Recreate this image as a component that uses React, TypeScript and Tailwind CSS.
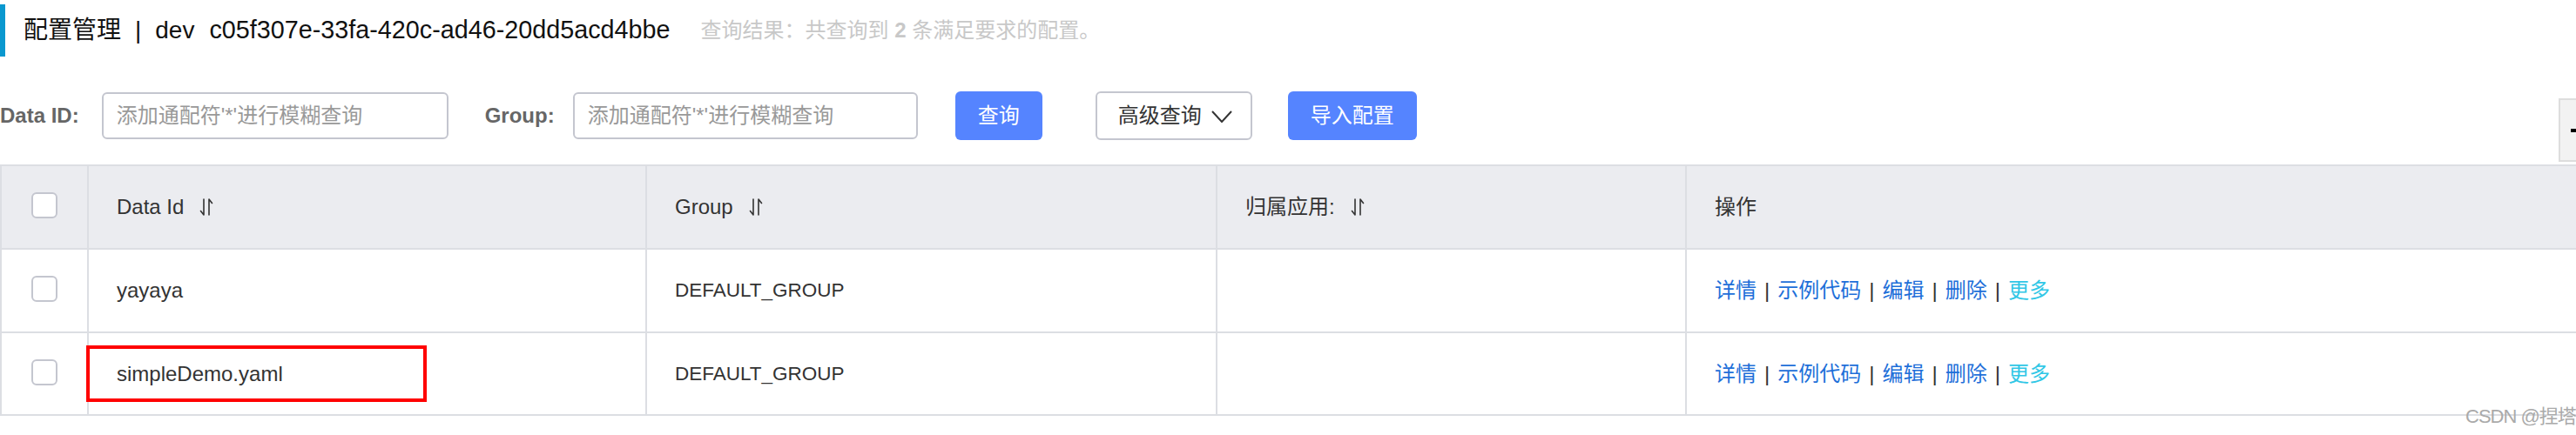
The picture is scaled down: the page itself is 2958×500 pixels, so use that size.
import React from "react";

const SortIcon = () => (
  <svg width="20" height="22" viewBox="0 0 20 22" fill="none" stroke="#333" strokeWidth="1.6" strokeLinecap="round" strokeLinejoin="round" className="ml-[16px]">
    <path d="M7 2V20L3.5 15.5" />
    <path d="M13 20V2L16.5 6.5" />
  </svg>
);

const Checkbox = () => (
  <div className="w-[30px] h-[30px] rounded-[6px] border-2 border-[#c4c6cf] bg-white -mt-[4px]" />
);

const Actions = () => (
  <div className="flex items-center text-[24px]">
    <span className="text-[#1e6fd9]">详情</span>
    <span className="mx-[9px] text-[#333]">|</span>
    <span className="text-[#1e6fd9]">示例代码</span>
    <span className="mx-[9px] text-[#333]">|</span>
    <span className="text-[#1e6fd9]">编辑</span>
    <span className="mx-[9px] text-[#333]">|</span>
    <span className="text-[#1e6fd9]">删除</span>
    <span className="mx-[9px] text-[#333]">|</span>
    <span className="text-[#30c7e6]">更多</span>
  </div>
);

const cell = "border-l-2 border-[#dcdee3] flex items-center pl-[32px]";
const cols = "grid grid-cols-[100px_641px_655px_539px_1fr]";

export default function App() {
  return (
    <div className="relative w-[2958px] h-[500px] overflow-hidden bg-white font-['Liberation_Sans','Noto_Sans_CJK_SC',sans-serif] text-[#333]">
      {/* Title */}
      <div className="mt-[5px] h-[60px] flex items-center">
        <div className="w-[6px] h-[60px] bg-[#0a98cf]" />
        <div className="ml-[21px] flex items-center text-[28px] text-[#111] whitespace-nowrap">
          <span>配置管理</span>
          <span className="mx-[16px]">|</span>
          <span>dev</span>
          <span className="ml-[17px] text-[28.75px]">c05f307e-33fa-420c-ad46-20dd5acd4bbe</span>
          <span className="ml-[35px] text-[24px] text-[#c8c8c8]">
            查询结果：共查询到 <b className="font-bold">2</b> 条满足要求的配置。
          </span>
        </div>
      </div>

      {/* Filters */}
      <div className="mt-[40px] h-[56px] flex items-center whitespace-nowrap">
        <span className="text-[24px] font-bold text-[#666]">Data ID:</span>
        <div className="ml-[26px] w-[398px] h-[54px] rounded-[6px] border-2 border-[#c4c6cf] flex items-center pl-[15px] text-[24px] text-[#999]">
          添加通配符'*'进行模糊查询
        </div>
        <span className="ml-[42px] text-[24px] font-bold text-[#666]">Group:</span>
        <div className="ml-[21px] w-[396px] h-[54px] rounded-[6px] border-2 border-[#c4c6cf] flex items-center pl-[15px] text-[24px] text-[#999]">
          添加通配符'*'进行模糊查询
        </div>
        <div className="ml-[43px] w-[100px] h-[56px] rounded-[6px] bg-[#5584ff] text-white text-[24px] flex items-center justify-center">
          查询
        </div>
        <div className="ml-[61px] w-[180px] h-[56px] rounded-[6px] border-2 border-[#c4c6cf] bg-white text-[#333] text-[24px] flex items-center pl-[24px]">
          <span>高级查询</span>
          <svg width="24" height="14" viewBox="0 0 24 14" fill="none" stroke="#333" strokeWidth="2" className="ml-[11px] mt-[2px]">
            <path d="M1 1L12 13L23 1" />
          </svg>
        </div>
        <div className="ml-[41px] w-[148px] h-[56px] rounded-[6px] bg-[#5584ff] text-white text-[24px] flex items-center justify-center">
          导入配置
        </div>
      </div>

      {/* Table */}
      <div className="relative mt-[28px]">
        <div className={`${cols} h-[96px] border-t-2 border-[#dcdee3] bg-[#ebecf0]`}>
          <div className="border-l-2 border-[#dcdee3] flex items-center justify-center">
            <Checkbox />
          </div>
          <div className={cell}>
            <span className="text-[24px]">Data Id</span>
            <SortIcon />
          </div>
          <div className={cell}>
            <span className="text-[24px]">Group</span>
            <SortIcon />
          </div>
          <div className={cell}>
            <span className="text-[24px]">归属应用:</span>
            <SortIcon />
          </div>
          <div className={cell}>
            <span className="text-[24px]">操作</span>
          </div>
        </div>

        <div className={`${cols} h-[96px] border-t-2 border-[#dcdee3] bg-white`}>
          <div className="border-l-2 border-[#dcdee3] flex items-center justify-center">
            <Checkbox />
          </div>
          <div className={cell}>
            <span className="text-[24px]">yayaya</span>
          </div>
          <div className={cell}>
            <span className="text-[22.5px]">DEFAULT_GROUP</span>
          </div>
          <div className={cell} />
          <div className={cell}>
            <Actions />
          </div>
        </div>

        <div className={`${cols} h-[97px] border-t-2 border-b-2 border-[#dcdee3] bg-white`}>
          <div className="border-l-2 border-[#dcdee3] flex items-center justify-center">
            <Checkbox />
          </div>
          <div className={cell}>
            <span className="text-[24px]">simpleDemo.yaml</span>
          </div>
          <div className={cell}>
            <span className="text-[22.5px]">DEFAULT_GROUP</span>
          </div>
          <div className={cell} />
          <div className={cell}>
            <Actions />
          </div>
        </div>

        {/* red highlight box */}
        <div className="absolute left-[99px] top-[208px] w-[391px] h-[65px] border-4 border-[#ff0000]" />
      </div>

      {/* floating cut-off widget at right edge */}
      <div className="absolute left-[2938px] top-[113px] w-[60px] h-[73px] border-2 border-[#dddddd] bg-[#f2f2f2]">
        <div className="absolute left-[12px] top-[33px] w-[20px] h-[4px] bg-black" />
      </div>

      {/* watermark */}
      <div className="absolute left-[2831px] top-[468px] text-[22px] tracking-[-1px] text-[#aaaaaa] whitespace-nowrap leading-none">
        CSDN @捏塔
      </div>
    </div>
  );
}
